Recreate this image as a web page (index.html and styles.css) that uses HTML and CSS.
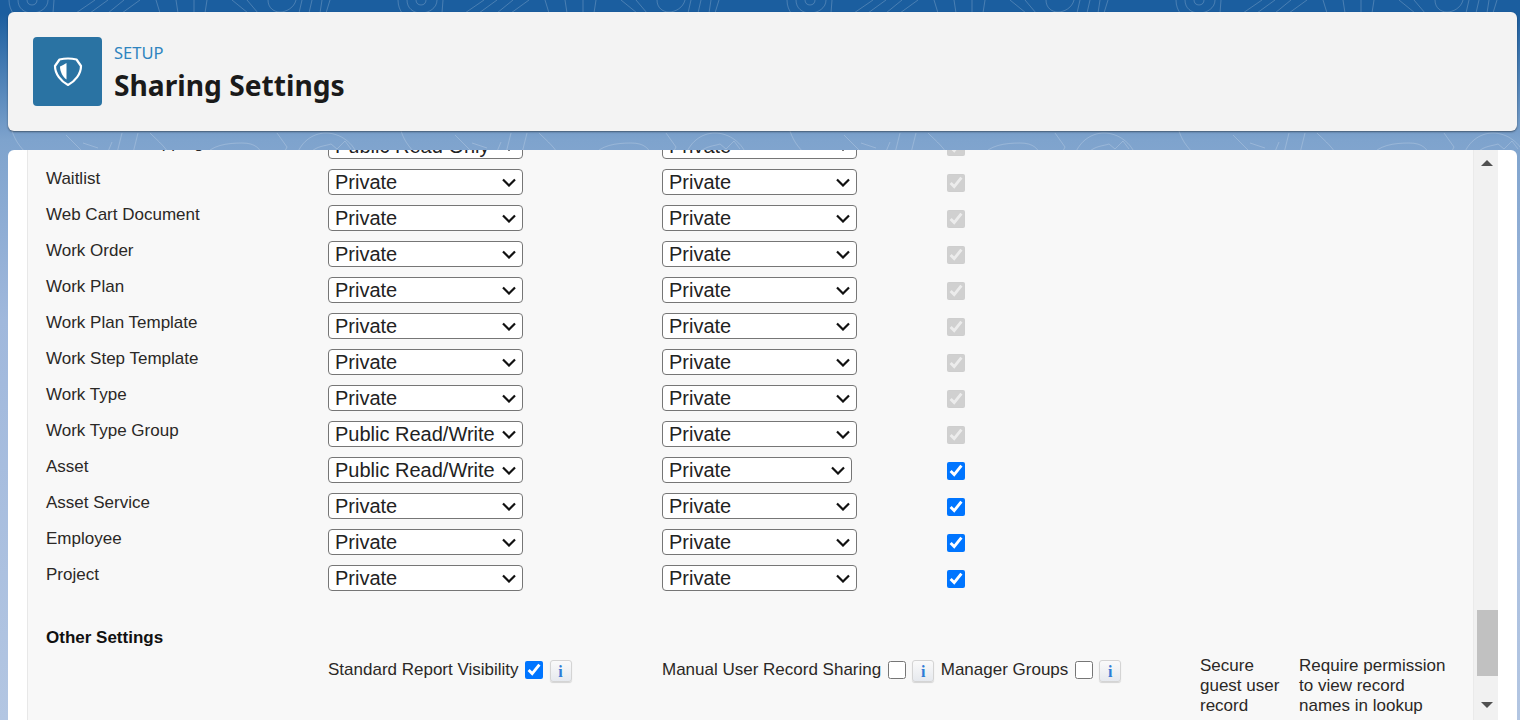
FILE: index.html
```html
<!DOCTYPE html>
<html lang="en">
<head>
  <meta charset="UTF-8">
  <title>Sharing Settings</title>
  <link rel="stylesheet" href="styles.css">
</head>
<body>

<!-- Background contour lines -->
<svg class="backdrop" width="1520" height="160" fill="none">
  <defs>
    <pattern id="contours" width="389" height="160" patternUnits="userSpaceOnUse">
      <g stroke="#fff" stroke-opacity="0.2">
        <path d="M9 0c0 6 2 10 4 13M18 0c0 8 6 13 14 13s16-5 16-13M27 0c0 3 2 5 5 5s5-2 5-5M54 0l-1 13M95 0L76 13M108 0L90 13M124 0L108 13M140 0L122 13M156 0l4 13M176 0l2 13M194 0v13M207 0l-2 13M232 0l16 13M247 0l11 13M268 0c0 8 6 12 12 12s14-4 16-12M302 0l-3 13M312 0l-3 13M322 0l-2 13M330 0l-4 13"/>
        <path d="M12 131c4 12 10 18 18 26M66 135l22 22M83 143l15 5M112 142l-5 12M122 133l-6 24M138 133l-6 24M150 133c8 8 18 16 20 24M204 157c6-12 24-14 38-14s18 6 22 14M277 133l10 14-5 10M296 157c4-14 16-24 30-24s28 10 32 24M311 152c6-6 14-6 20-8l6 5 8-8 6 8"/>
      </g>
    </pattern>
  </defs>
  <rect width="1520" height="160" fill="url(#contours)"/>
</svg>

<header class="page-header">
  <div class="header-icon">
    <svg width="30" height="30" viewBox="0 0 30 30">
      <path d="M6.500 2.500Q15 .5 23.500 2.500L28 9C28 17 22 24.500 15 28 8 24.500 2 17 2 9z" fill="none" stroke="#fff" stroke-width="2.200" stroke-linejoin="round"/>
      <path d="M13.500 6v16.500C10 20 7 15 7 9.500Q10 8 13.500 6z" fill="#fff"/>
    </svg>
  </div>
  <div class="header-text">
    <div class="header-eyebrow">SETUP</div>
    <h1 class="header-title">Sharing Settings</h1>
  </div>
</header>

<main class="content-card">
  <div class="content-scroll">
    <table class="settings-table">
      <tr><td class="name">Work Order Mapping</td><td class="col-a"><select><option>Public Read Only</option></select></td><td class="col-b"><select><option>Private</option></select></td><td class="col-c"><input type="checkbox" checked disabled></td></tr>
      <tr><td class="name">Waitlist</td><td class="col-a"><select><option>Private</option></select></td><td class="col-b"><select><option>Private</option></select></td><td class="col-c"><input type="checkbox" checked disabled></td></tr>
      <tr><td class="name">Web Cart Document</td><td class="col-a"><select><option>Private</option></select></td><td class="col-b"><select><option>Private</option></select></td><td class="col-c"><input type="checkbox" checked disabled></td></tr>
      <tr><td class="name">Work Order</td><td class="col-a"><select><option>Private</option></select></td><td class="col-b"><select><option>Private</option></select></td><td class="col-c"><input type="checkbox" checked disabled></td></tr>
      <tr><td class="name">Work Plan</td><td class="col-a"><select><option>Private</option></select></td><td class="col-b"><select><option>Private</option></select></td><td class="col-c"><input type="checkbox" checked disabled></td></tr>
      <tr><td class="name">Work Plan Template</td><td class="col-a"><select><option>Private</option></select></td><td class="col-b"><select><option>Private</option></select></td><td class="col-c"><input type="checkbox" checked disabled></td></tr>
      <tr><td class="name">Work Step Template</td><td class="col-a"><select><option>Private</option></select></td><td class="col-b"><select><option>Private</option></select></td><td class="col-c"><input type="checkbox" checked disabled></td></tr>
      <tr><td class="name">Work Type</td><td class="col-a"><select><option>Private</option></select></td><td class="col-b"><select><option>Private</option></select></td><td class="col-c"><input type="checkbox" checked disabled></td></tr>
      <tr><td class="name">Work Type Group</td><td class="col-a"><select><option>Public Read/Write</option></select></td><td class="col-b"><select><option>Private</option></select></td><td class="col-c"><input type="checkbox" checked disabled></td></tr>
      <tr><td class="name">Asset</td><td class="col-a"><select><option>Public Read/Write</option></select></td><td class="col-b"><select class="narrow"><option>Private</option></select></td><td class="col-c"><input type="checkbox" checked></td></tr>
      <tr><td class="name">Asset Service</td><td class="col-a"><select><option>Private</option></select></td><td class="col-b"><select><option>Private</option></select></td><td class="col-c"><input type="checkbox" checked></td></tr>
      <tr><td class="name">Employee</td><td class="col-a"><select><option>Private</option></select></td><td class="col-b"><select><option>Private</option></select></td><td class="col-c"><input type="checkbox" checked></td></tr>
      <tr><td class="name">Project</td><td class="col-a"><select><option>Private</option></select></td><td class="col-b"><select><option>Private</option></select></td><td class="col-c"><input type="checkbox" checked></td></tr>
    </table>

    <h2 class="other-title">Other Settings</h2>

    <div class="other-row">
      <div class="other-item item-report">
        <span>Standard Report Visibility</span>
        <input type="checkbox" checked>
        <span class="info-btn">i</span>
      </div>
      <div class="other-item item-manual">
        <span>Manual User Record Sharing</span>
        <input type="checkbox">
        <span class="info-btn">i</span>
        <span>Manager Groups</span>
        <input type="checkbox">
        <span class="info-btn">i</span>
      </div>
      <div class="other-text item-guest">Secure guest user record</div>
      <div class="other-text item-lookup">Require permission to view record names in lookup</div>
    </div>
  </div>

  <div class="scrollbar">
    <span class="arrow-up"></span>
    <div class="scroll-thumb"></div>
    <span class="arrow-down"></span>
  </div>
</main>

</body>
</html>
```

FILE: styles.css
```css
/* Basic Page Styling */
body {
  position: relative;
  margin: 0;
  padding: 12px 3px 0 8px;
  box-sizing: border-box;
  height: 720px;
  overflow: hidden;
  font-family: 'Liberation Sans', Arial, sans-serif;
  color: #2b2826;
  background: linear-gradient(to bottom, #1b5e9f 0, #1b5e9f 14px, #7ea3cd 140px, #a0b8dc 320px, #b3c6e2 720px);
}

.backdrop {
  position: absolute;
  top: 0;
  left: 0;
}

/* Page Header */
.page-header {
  position: relative;
  display: flex;
  align-items: center;
  gap: 12px;
  height: 119px;
  box-sizing: border-box;
  padding: 0 24px 0 25px;
  background-color: #f3f3f3;
  border-radius: 6px;
  box-shadow: 0 1px 2px rgba(0, 0, 0, 0.45);
}

.header-icon {
  display: flex;
  align-items: center;
  justify-content: center;
  width: 69px;
  height: 69px;
  background-color: #2a73a3;
  border-radius: 4px;
}

.header-eyebrow {
  padding-top: 1px;
  font-family: 'Noto Sans', sans-serif;
  font-size: 16.500px;
  line-height: 22px;
  color: #2e84bf;
}

.header-title {
  margin: 3px 0 0;
  font-family: 'Noto Sans', sans-serif;
  font-size: 28.200px;
  line-height: 36px;
  font-weight: 700;
  color: #1a1a1a;
}

/* Content Card */
.content-card {
  position: relative;
  display: flex;
  height: 570px;
  margin-top: 19px;
  padding: 0 19px;
  background-color: #fff;
  border-radius: 6px 6px 0 0;
  overflow: hidden;
}

.content-scroll {
  flex: 1;
  min-width: 0;
  padding-left: 18px;
  background-color: #f8f8f8;
  border-left: 1px solid #e8e8e8;
  overflow: hidden;
}

/* Sharing Table */
.settings-table {
  border-collapse: collapse;
  margin-top: -22px;
}

.settings-table td {
  height: 36px;
  padding: 0;
  vertical-align: middle;
}

.settings-table .name {
  width: 282px;
  font-size: 17px;
  line-height: 19px;
  padding-bottom: 8px;
  box-sizing: border-box;
}

.settings-table .col-a {
  width: 334px;
}

.settings-table .col-b {
  width: 285px;
}

.settings-table .col-c input {
  margin-top: 2px;
}

.settings-table select {
  display: block;
  width: 195px;
  height: 26px;
  padding: 0 0 0 6px;
  font-family: 'Liberation Sans', Arial, sans-serif;
  font-size: 20px;
  color: #222;
  appearance: none;
  background: #fff url("data:image/svg+xml,%3Csvg xmlns='http://www.w3.org/2000/svg' width='14' height='9'%3E%3Cpath d='M1 1.500l6 6 6-6' fill='none' stroke='%23111' stroke-width='2.200'/%3E%3C/svg%3E") no-repeat right 6px center;
  border: 1px solid #767676;
  border-radius: 4px;
}

.settings-table select.narrow {
  width: 190px;
}

input[type="checkbox"] {
  display: block;
  width: 18px;
  height: 18px;
  margin: 0;
}

/* Other Settings */
.other-title {
  margin: 32px 0 0;
  font-size: 17px;
  line-height: 19px;
  font-weight: 700;
  color: #111;
}

.other-row {
  display: flex;
  align-items: flex-start;
  margin-top: 9px;
  font-size: 17px;
  line-height: 20px;
}

.other-item {
  display: flex;
  align-items: center;
  gap: 6.500px;
  flex-shrink: 0;
  margin-top: 2px;
}

.item-report {
  width: 334px;
  margin-left: 282px;
}

.item-manual {
  width: 538px;
}

.other-text {
  flex-shrink: 0;
}

.item-guest {
  width: 84px;
  margin-right: 15px;
}

.item-lookup {
  width: 160px;
}

.info-btn {
  display: block;
  width: 22px;
  height: 22px;
  margin-top: 2px;
  box-sizing: border-box;
  font-family: 'Liberation Serif', serif;
  font-size: 16px;
  line-height: 21px;
  font-weight: 700;
  text-align: center;
  color: #2e7bd6;
  background: linear-gradient(to bottom, #fafafa, #e6e9ee);
  border: 1px solid #d4d4d4;
  border-radius: 3px;
  box-shadow: 0 1px 1px rgba(0, 0, 0, 0.15);
}

/* Scrollbar */
.scrollbar {
  position: relative;
  width: 25px;
  flex-shrink: 0;
  background-color: #f1f1f1;
  border-left: 1px solid #eaeaea;
  box-sizing: border-box;
}

.scroll-thumb {
  position: absolute;
  top: 460px;
  left: 3px;
  width: 21px;
  height: 66px;
  background-color: #c1c1c1;
}

.arrow-up {
  position: absolute;
  top: 10px;
  left: 7px;
  border-left: 6px solid transparent;
  border-right: 6px solid transparent;
  border-bottom: 6px solid #505050;
}

.arrow-down {
  position: absolute;
  top: 552px;
  left: 7px;
  border-left: 6px solid transparent;
  border-right: 6px solid transparent;
  border-top: 6px solid #505050;
}
```
